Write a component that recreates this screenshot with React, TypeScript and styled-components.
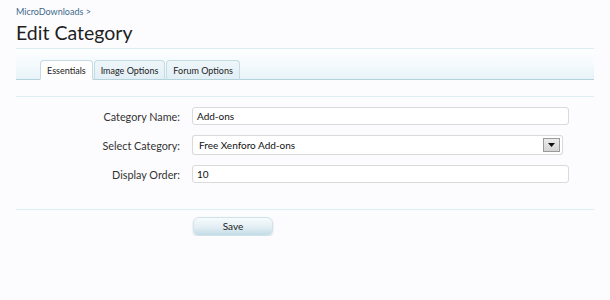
import React from 'react';
import styled, { createGlobalStyle } from 'styled-components';

const GlobalStyle = createGlobalStyle`
  body {
    margin: 0;
    background: #fcfcfe;
    font-family: Lato, "Open Sans", sans-serif;
    color: #333;
  }
`;

const Page = styled.div`
  padding: 6px 16px 0;
`;

const Breadcrumb = styled.a`
  display: block;
  font-size: 9px;
  line-height: 12px;
  color: #3d6a8a;
  text-decoration: none;
`;

const Title = styled.h1`
  margin: 0;
  font-size: 19.5px;
  font-weight: 400;
  line-height: 30px;
  color: #1e1e1e;
`;

const TabBar = styled.div`
  display: flex;
  align-items: flex-end;
  height: 30px;
  padding-left: 24px;
  border-top: 1px solid #dcedf1;
  border-bottom: 1px solid #b4d2dc;
  background: linear-gradient(to bottom, #fdfeff 0%, #f5fafd 50%, #e8f3f8 100%);
`;

const Tab = styled.div<{ $active?: boolean }>`
  height: 18px;
  margin-bottom: -1px;
  margin-right: 1px;
  padding: 0 6px;
  display: flex;
  align-items: center;
  font-size: 9px;
  color: #222;
  border: 1px solid #c5dce5;
  border-bottom-color: ${({ $active }) => ($active ? '#ffffff' : '#b4d2dc')};
  border-radius: 4px 4px 0 0;
  background: ${({ $active }) =>
    $active ? '#ffffff' : 'linear-gradient(to bottom, #eef6fa, #e2eff5)'};
`;

const Form = styled.div`
  margin-top: 16px;
  padding: 10px 0 26px;
  border-top: 1px solid #dceef2;
  border-bottom: 1px solid #dceef2;
  display: grid;
  grid-template-columns: 164px 377px;
  column-gap: 12px;
  row-gap: 10px;
  align-items: center;
`;

const Label = styled.label`
  text-align: right;
  font-size: 10.8px;
  color: #333;
`;

const Input = styled.div`
  box-sizing: border-box;
  height: 18px;
  padding: 0 4px;
  display: flex;
  align-items: center;
  font-size: 10px;
  color: #111;
  background: #fff;
  border: 1px solid #dadada;
  border-radius: 3px;
`;

const Select = styled(Input)`
  width: 371px;
  height: 20px;
  padding: 0 2px 0 6px;
  justify-content: space-between;
  box-shadow: 0 0 1px rgba(0, 0, 0, 0.1);
`;

const DropButton = styled.span`
  box-sizing: border-box;
  width: 17px;
  height: 14px;
  display: flex;
  align-items: center;
  justify-content: center;
  border: 1px solid #9a9a9a;
  background: linear-gradient(to bottom, #ececec, #d4d4d4);
`;

const Actions = styled.div`
  padding: 4px 0 0 177px;
`;

const SaveButton = styled.button`
  width: 80px;
  height: 19px;
  font-family: inherit;
  font-size: 10px;
  color: #222;
  border: 1px solid #d0e3eb;
  border-radius: 6px;
  background: linear-gradient(to bottom, #f7fbfd 0%, #e2eef4 55%, #c3dbe6 100%);
  box-shadow: 0 1px 2px rgba(0, 0, 0, 0.15);
`;

export default function App() {
  return (
    <>
      <GlobalStyle />
      <Page>
        <Breadcrumb>MicroDownloads &gt;</Breadcrumb>
        <Title>Edit Category</Title>
        <TabBar>
          <Tab $active>Essentials</Tab>
          <Tab>Image Options</Tab>
          <Tab>Forum Options</Tab>
        </TabBar>
        <Form>
          <Label>Category Name:</Label>
          <Input>Add-ons</Input>
          <Label>Select Category:</Label>
          <Select>
            <span>Free Xenforo Add-ons</span>
            <DropButton>
              <svg width="7" height="4" viewBox="0 0 7 4">
                <path d="M0 0h7L3.5 4z" fill="#111" />
              </svg>
            </DropButton>
          </Select>
          <Label>Display Order:</Label>
          <Input>10</Input>
        </Form>
        <Actions>
          <SaveButton>Save</SaveButton>
        </Actions>
      </Page>
    </>
  );
}
